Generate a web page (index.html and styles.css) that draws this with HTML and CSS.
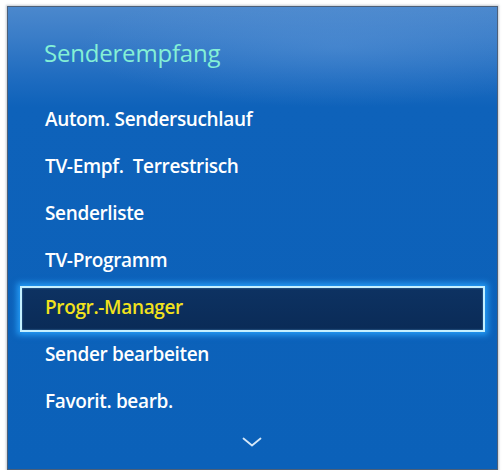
FILE: index.html
```html
<!DOCTYPE html>
<html>
<head>
<meta charset="utf-8">
<link rel="stylesheet" href="styles.css">
</head>
<body>
<div class="panel">
  <div class="header">Senderempfang</div>
  <ul class="menu">
    <li class="item">Autom. Sendersuchlauf</li>
    <li class="item">TV-Empf. &nbsp;Terrestrisch</li>
    <li class="item">Senderliste</li>
    <li class="item">TV-Programm</li>
    <li class="item selected">Progr.-Manager</li>
    <li class="item">Sender bearbeiten</li>
    <li class="item">Favorit. bearb.</li>
  </ul>
  <div class="more">
    <svg width="20" height="10" viewBox="0 0 20 10"><path d="M1.5 1.5 L10 8.5 L18.5 1.5" fill="none" stroke="#d6e8f8" stroke-width="1.8" stroke-linecap="round" stroke-linejoin="round"/></svg>
  </div>
</div>
</body>
</html>
```
FILE: styles.css
```css
html, body {
  margin: 0;
  padding: 0;
  background: #ffffff;
}
body {
  padding: 6px 0 0 7px;
  font-family: "Open Sans", "Noto Sans", sans-serif;
}
.panel {
  box-sizing: border-box;
  width: 491px;
  height: 464px;
  border: 1px solid #4c5f78;
  box-shadow: 0 0 2px 1px rgba(140,150,165,0.5);
  background:
    radial-gradient(ellipse 260px 60px at 330px 40px, rgba(120,170,230,0.25), rgba(120,170,230,0) 100%),
    linear-gradient(180deg, #4b88cd 0px, #3a7dc8 30px, #1f6cc0 70px, #0e62ba 100px, #0b61b9 100%);
  display: flex;
  flex-direction: column;
}
.header {
  padding: 30px 0 0 36px;
  height: 61px;
  font-size: 24px;
  line-height: 32px;
  font-weight: 500;
  color: #84f0d6;
  letter-spacing: -0.2px;
}
.menu {
  list-style: none;
  margin: 0 12px;
  padding: 0;
}
.item {
  box-sizing: border-box;
  height: 47px;
  padding: 0 0 4px 23px;
  border: 2px solid transparent;
  line-height: 39px;
  font-size: 19px;
  font-weight: 600;
  color: #ffffff;
  letter-spacing: -0.35px;
}
.item.selected {
  height: 46px;
  margin-bottom: 1px;
  border-color: #c4f0ff;
  color: #f2e21c;
  background: linear-gradient(180deg, #0d3262 0%, #0a2b57 100%);
  box-shadow: 0 0 6px 3px rgba(40,165,255,0.85), inset 0 0 2px rgba(120,200,255,0.6);
}
.more {
  display: flex;
  justify-content: center;
  padding-top: 10px;
  padding-right: 1px;
}
```
